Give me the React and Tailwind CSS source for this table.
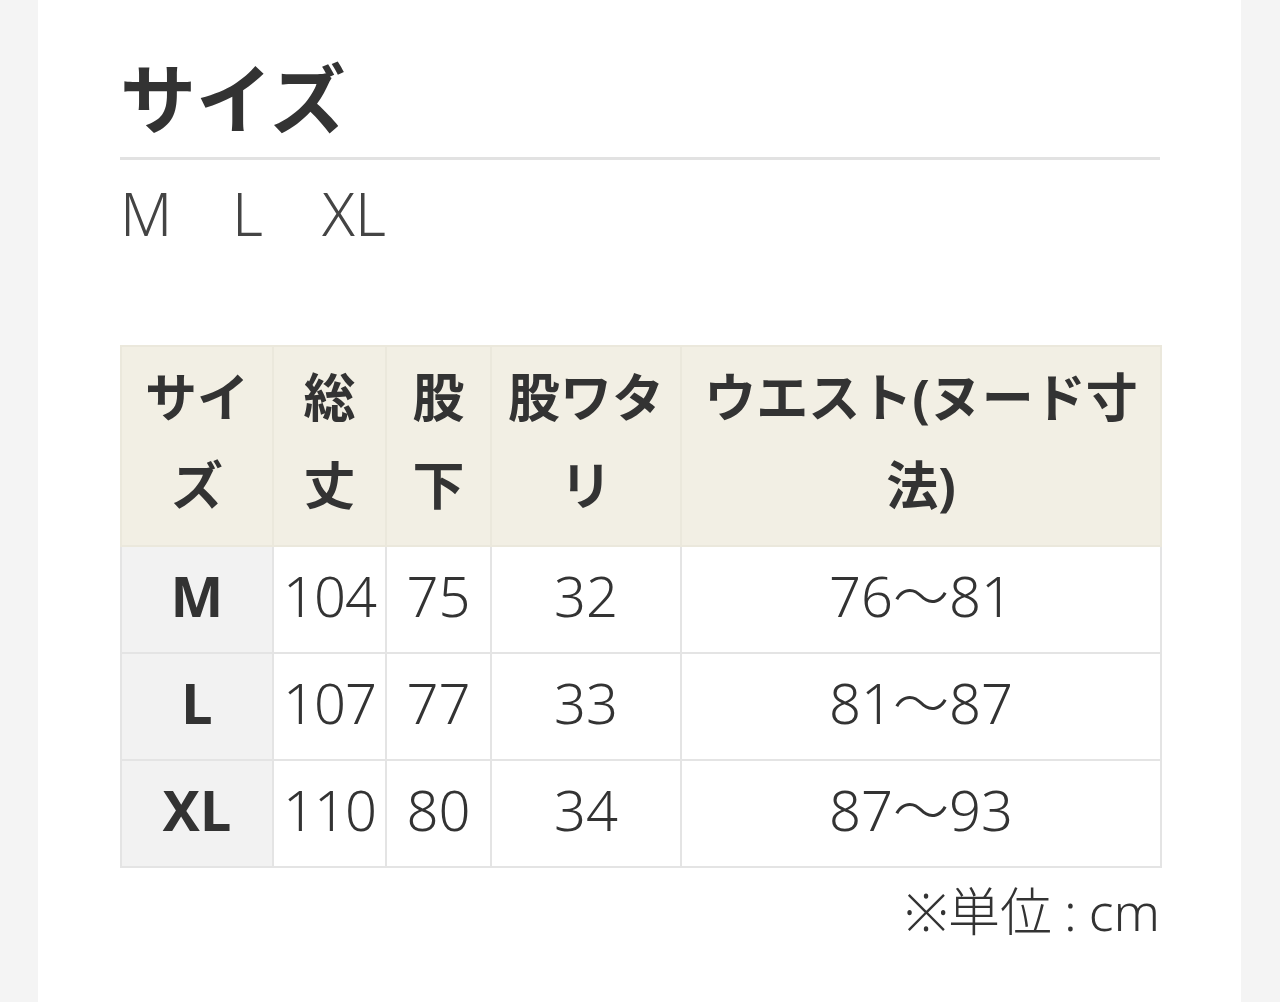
const sizes = [
  { size: "M", total: "104", inseam: "75", rise: "32", waist: "76〜81" },
  { size: "L", total: "107", inseam: "77", rise: "33", waist: "81〜87" },
  { size: "XL", total: "110", inseam: "80", rise: "34", waist: "87〜93" },
];

const font = { fontFamily: '"Noto Sans", "Noto Sans CJK JP", sans-serif' };

export default function App() {
  return (
    <div className="min-h-screen bg-[#f4f4f4] text-[#333]" style={font}>
      <div className="ml-[38px] w-[1203px] min-h-[1002px] bg-white pl-[82px] pt-[40px]">
        <div className="w-[1040px]">
          <h1 className="text-[76px] font-bold leading-[117px]">サイズ</h1>
          <div className="h-[3px] bg-[#e2e2e2]" />
          <div className="mt-[13px] flex text-[60px] font-light leading-[80px] text-[#444]">
            <span className="w-[112px]">M</span>
            <span className="w-[90px]">L</span>
            <span>XL</span>
          </div>

          <table className="mt-[92px] w-[1040px] table-fixed border-collapse border-2 border-[#e4e4e4]">
            <colgroup>
              <col className="w-[152px]" />
              <col className="w-[113px]" />
              <col className="w-[105px]" />
              <col className="w-[190px]" />
              <col className="w-[480px]" />
            </colgroup>
            <thead>
              <tr className="h-[200px] bg-[#f2efe4] text-[52px] font-bold leading-[88px]">
                <th className="border-2 border-[#ebe8dc] pb-[10px] text-center">サイ<br />ズ</th>
                <th className="border-2 border-[#ebe8dc] pb-[10px] text-center">総<br />丈</th>
                <th className="border-2 border-[#ebe8dc] pb-[10px] text-center">股<br />下</th>
                <th className="border-2 border-[#ebe8dc] pb-[10px] text-center">股ワタ<br />リ</th>
                <th className="border-2 border-[#ebe8dc] pb-[10px] text-center">ウエスト(ヌード寸<br />法)</th>
              </tr>
            </thead>
            <tbody>
              {sizes.map((r) => (
                <tr key={r.size} className="h-[107px] text-[56px] leading-none">
                  <td className="border-2 border-[#e4e4e4] bg-[#f2f2f2] pb-[10px] text-center font-bold">{r.size}</td>
                  <td className="border-2 border-[#e4e4e4] pb-[10px] text-center font-light tracking-[-1px]">{r.total}</td>
                  <td className="border-2 border-[#e4e4e4] pb-[10px] text-center font-light">{r.inseam}</td>
                  <td className="border-2 border-[#e4e4e4] pb-[10px] text-center font-light">{r.rise}</td>
                  <td className="border-2 border-[#e4e4e4] pb-[10px] text-center font-light">{r.waist}</td>
                </tr>
              ))}
            </tbody>
          </table>

          <p className="mt-[8px] text-right text-[52px] font-light leading-[70px]">
            ※単位<span className="mx-[12px]">:</span>cm
          </p>
        </div>
      </div>
    </div>
  );
}
